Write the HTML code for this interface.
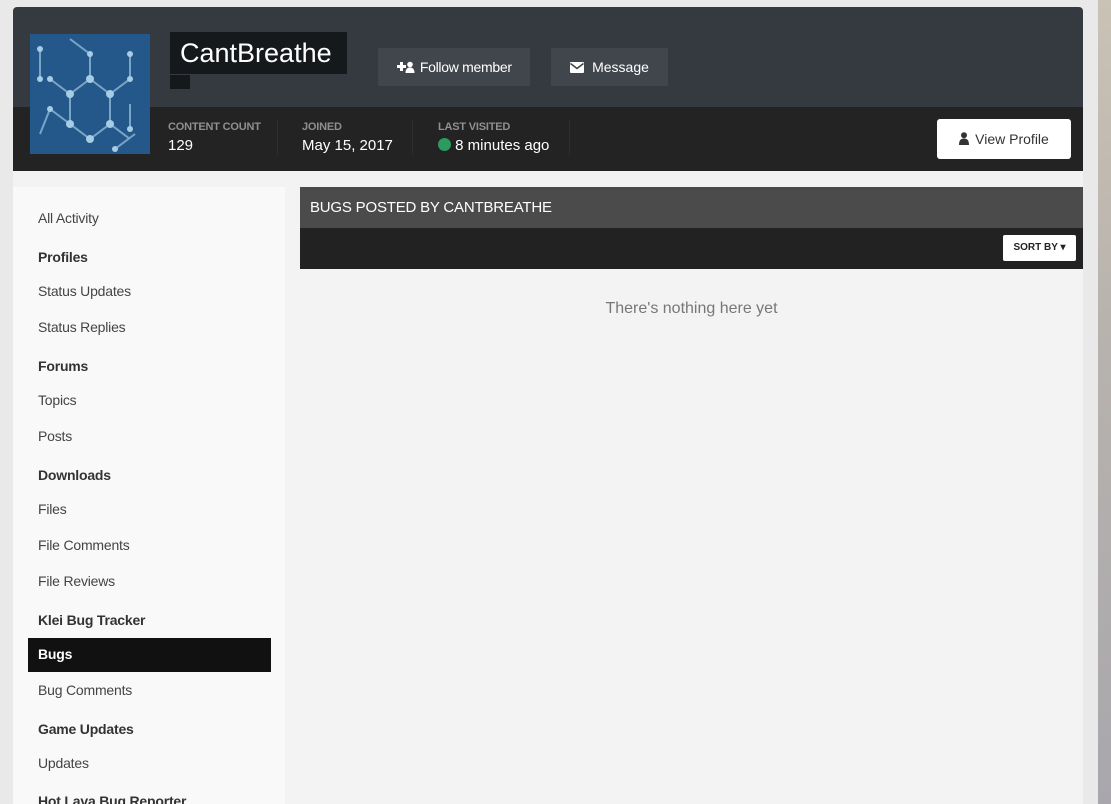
<!DOCTYPE html>
<html><head><meta charset="utf-8"><style>
*{margin:0;padding:0;box-sizing:border-box}
body{width:1111px;height:804px;overflow:hidden;background:#e9e9e9;font-family:"Liberation Sans",Arial,sans-serif;position:relative}
.a{position:absolute}
.right{left:1098px;top:0;width:13px;height:804px;background:linear-gradient(#c9c2b5,#b8b3ad 40%,#a9a7ad)}
.card{left:13px;top:7px;width:1070px;height:797px;background:#f3f3f3;border-radius:4px 4px 0 0;overflow:hidden}
.top{left:0;top:0;width:1070px;height:100px;background:#353a40}
.bar{left:0;top:100px;width:1070px;height:64px;background:#232323}
.btn{background:#41464c;color:#fff;font-size:14px;height:38px;line-height:38px;text-align:center}
.lbl{font-size:11px;color:#8d8f92;text-transform:uppercase;font-weight:bold;letter-spacing:-0.2px}
.val{font-size:15px;color:#fff}
.sep{width:1px;height:36px;background:#2e2e2e}
.side{left:0;top:180px;width:272px;height:620px;background:#f9f9f9}
.s{position:absolute;left:25px;font-size:14px;color:#444;letter-spacing:-0.2px}
.h{font-weight:bold;color:#333}
</style></head><body>
<div class="a right"></div>
<div class="a card">
 <div class="a top"></div>
 <div class="a bar"></div>
 <svg class="a" style="left:17px;top:27px" width="120" height="120" viewBox="0 0 120 120">
  <rect width="120" height="120" fill="#25588a"/>
  <g stroke="#8fb9d6" stroke-width="2" fill="none" opacity=".8">
   <path d="M10 15 V45 M40 5 L60 20 L60 45 L40 60 L20 45 M60 45 L80 60 L100 45 L100 20 M80 60 L80 90 L60 105 L40 90 L40 60 M80 90 L100 105 M20 75 L40 90 M10 100 L20 75 M100 70 V95 M85 115 L105 100"/>
  </g>
  <g fill="#a6cde6"><circle cx="10" cy="15" r="3"/><circle cx="10" cy="45" r="3"/><circle cx="40" cy="60" r="4"/><circle cx="60" cy="20" r="3"/><circle cx="60" cy="45" r="4"/><circle cx="20" cy="45" r="3"/><circle cx="80" cy="60" r="4"/><circle cx="100" cy="45" r="3"/><circle cx="100" cy="20" r="3"/><circle cx="80" cy="90" r="4"/><circle cx="60" cy="105" r="4"/><circle cx="40" cy="90" r="4"/><circle cx="20" cy="75" r="3"/><circle cx="100" cy="95" r="3"/><circle cx="85" cy="115" r="3"/></g>
 </svg>
 <div class="a" style="left:157px;top:25px;width:177px;height:42px;background:#16191c;color:#fff;font-size:27px;line-height:42px;padding-left:10px">CantBreathe</div>
 <div class="a" style="left:157px;top:68px;width:20px;height:14px;background:#16191c"></div>
 <div class="a btn" style="left:365px;top:41px;width:152px;letter-spacing:-0.3px">
  <svg width="20" height="12" viewBox="0 0 20 12" style="vertical-align:-1px"><path d="M4 1h3v3h3v3H7v3H4V7H1V4h3z" fill="#fff"/><circle cx="14" cy="3.5" r="2.8" fill="#fff"/><path d="M9.5 12c0-4 2-5.5 4.5-5.5s4.5 1.5 4.5 5.5z" fill="#fff"/></svg> Follow member</div>
 <div class="a btn" style="left:538px;top:41px;width:117px">
  <svg width="14" height="11" viewBox="0 0 14 11" style="vertical-align:-1px;margin-right:8px"><rect width="14" height="11" rx="1" fill="#fff"/><path d="M0.5 1.5 L7 6.5 L13.5 1.5" stroke="#41464c" stroke-width="1.6" fill="none"/></svg>Message</div>
 <div class="a lbl" style="left:155px;top:114px">Content Count</div>
 <div class="a val" style="left:155px;top:130px">129</div>
 <div class="a sep" style="left:264px;top:112px"></div>
 <div class="a lbl" style="left:289px;top:114px">Joined</div>
 <div class="a val" style="left:289px;top:130px">May 15, 2017</div>
 <div class="a sep" style="left:399px;top:112px"></div>
 <div class="a lbl" style="left:425px;top:114px">Last Visited</div>
 <div class="a val" style="left:425px;top:130px"><span style="display:inline-block;width:13px;height:13px;border-radius:50%;background:#2d9b5e;vertical-align:-1px"></span> 8 minutes ago</div>
 <div class="a sep" style="left:556px;top:112px"></div>
 <div class="a" style="left:924px;top:112px;width:134px;height:40px;background:#fff;border-radius:3px;color:#333;font-size:14px;line-height:40px;text-align:center">
  <svg width="10" height="13" viewBox="0 0 10 13" style="vertical-align:-1px;margin-right:6px"><circle cx="5" cy="3.2" r="3" fill="#333"/><path d="M0 13c0-5 2-6.5 5-6.5s5 1.5 5 6.5z" fill="#333"/></svg>View Profile</div>
 <div class="a side">
  <div class="s" style="top:23px">All Activity</div>
  <div class="s h" style="top:62px">Profiles</div>
  <div class="s" style="top:96px">Status Updates</div>
  <div class="s" style="top:132px">Status Replies</div>
  <div class="s h" style="top:171px">Forums</div>
  <div class="s" style="top:205px">Topics</div>
  <div class="s" style="top:241px">Posts</div>
  <div class="s h" style="top:280px">Downloads</div>
  <div class="s" style="top:314px">Files</div>
  <div class="s" style="top:350px">File Comments</div>
  <div class="s" style="top:386px">File Reviews</div>
  <div class="s h" style="top:425px">Klei Bug Tracker</div>
  <div class="a" style="left:15px;top:451px;width:243px;height:34px;background:#111"></div>
  <div class="s h" style="top:459px;color:#fff">Bugs</div>
  <div class="s" style="top:495px">Bug Comments</div>
  <div class="s h" style="top:534px">Game Updates</div>
  <div class="s" style="top:568px">Updates</div>
  <div class="s h" style="top:606px">Hot Lava Bug Reporter</div>
 </div>
 <div class="a" style="left:287px;top:180px;width:783px;height:41px;background:#4b4b4b;color:#fff;font-size:15px;line-height:41px;padding-left:10px;letter-spacing:-0.2px">BUGS POSTED BY CANTBREATHE</div>
 <div class="a" style="left:287px;top:221px;width:783px;height:41px;background:#222"></div>
 <div class="a" style="left:990px;top:228px;width:73px;height:26px;background:#fff;border-radius:2px;font-size:10px;font-weight:bold;color:#222;line-height:26px;text-align:center">SORT BY ▾</div>
 <div class="a" style="left:287px;top:293px;width:783px;text-align:center;font-size:16px;color:#777">There's nothing here yet</div>
</div>
</body></html>
